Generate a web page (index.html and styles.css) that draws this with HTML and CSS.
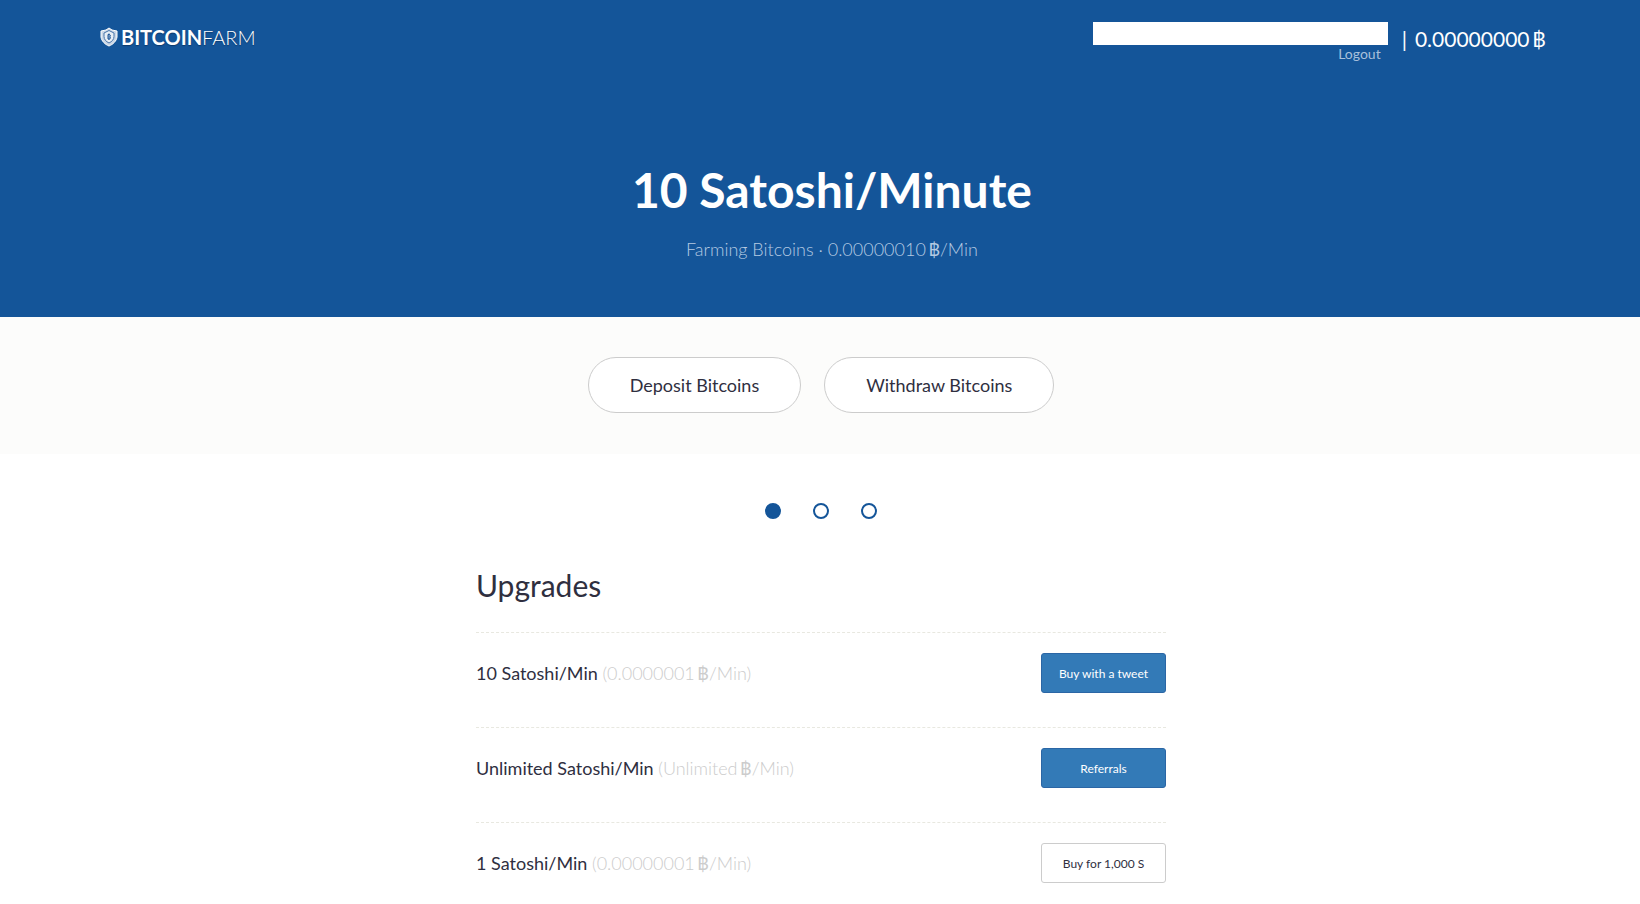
FILE: index.html
```html
<!DOCTYPE html>
<html lang="en">
<head>
<meta charset="utf-8">
<meta name="viewport" content="width=device-width, initial-scale=1">
<title>BitcoinFarm</title>
<link rel="stylesheet" href="styles.css">
</head>
<body>
<header class="hero">
  <nav class="topbar">
    <a class="logo" href="#">
      <svg class="logo-icon" viewBox="0 0 18 20" aria-hidden="true">
        <path d="M9 1 L12 3 L17 4 V10 C16.500 14 13 17.500 9 19 C5 17.500 1.500 14 1 10 V4 L6 3 Z" fill="#cbd7e6" stroke="#fff" stroke-width="1"/>
        <path d="M9 3.500 L14 6 V9.500 C14 12.500 12 14.500 9 16 C6 14.500 4 12.500 4 9.500 V6 Z" fill="#e8eef5" stroke="#4774aa" stroke-width="1"/>
        <path d="M8 7.500 H9.500 Q11 8 10 9.500 Q11 11.500 9.500 12 H8 Z M9 6.500 V13" fill="none" stroke="#1f5798" stroke-width="1"/>
      </svg>
      <span class="logo-text"><b>BITCOIN</b>FARM</span>
    </a>
    <div class="account">
      <div class="user">
        <div class="address"></div>
        <a class="logout" href="#">Logout</a>
      </div>
      <div class="balance"><span class="divider">|</span><span>0.00000000&thinsp;฿</span></div>
    </div>
  </nav>
  <div class="headline">
    <h1>10 Satoshi/Minute</h1>
    <p>Farming Bitcoins · 0.00000010&thinsp;<b>฿</b>/Min</p>
  </div>
</header>
<section class="actions">
  <button class="pill" type="button">Deposit Bitcoins</button>
  <button class="pill" type="button">Withdraw Bitcoins</button>
</section>
<main class="content">
  <div class="dots">
    <button class="dot dot-active" type="button" aria-label="Page 1"></button>
    <button class="dot" type="button" aria-label="Page 2"></button>
    <button class="dot" type="button" aria-label="Page 3"></button>
  </div>
  <h2>Upgrades</h2>
  <ul class="upgrades">
    <li><span class="name">10 Satoshi/Min <span class="rate">(0.0000001&thinsp;<b>฿</b>/Min)</span></span><button class="buy buy-primary" type="button">Buy with a tweet</button></li>
    <li><span class="name">Unlimited Satoshi/Min <span class="rate">(Unlimited&thinsp;<b>฿</b>/Min)</span></span><button class="buy buy-primary" type="button">Referrals</button></li>
    <li><span class="name">1 Satoshi/Min <span class="rate">(0.00000001&thinsp;<b>฿</b>/Min)</span></span><button class="buy" type="button">Buy for 1,000 S</button></li>
  </ul>
</main>
</body>
</html>
```
FILE: styles.css
```css
* {
  box-sizing: border-box;
}

body {
  margin: 0;
  background: #fff;
  color: #2f2f3f;
  font-family: Lato, "Open Sans", sans-serif;
  font-size: 18px;
}

button {
  font-family: inherit;
  color: inherit;
  cursor: pointer;
}

.hero {
  background: #145599;
  color: #fff;
  padding: 22px 94px 54px 100px;
}

.topbar {
  display: flex;
  justify-content: space-between;
  align-items: flex-start;
}

.logo {
  display: flex;
  align-items: center;
  gap: 3px;
  margin-top: 3px;
  color: #fff;
  text-decoration: none;
  text-shadow: 0 1px 1px #0d3a6c;
}

.logo-icon {
  width: 18px;
  height: 20px;
}

.logo-text {
  font-size: 20px;
  line-height: 24px;
  font-weight: 300;
}

.logo-text b {
  font-weight: 700;
}

.account {
  display: flex;
  gap: 14px;
}

.user {
  display: flex;
  flex-direction: column;
  align-items: flex-end;
}

.address {
  width: 295px;
  height: 23px;
  background: #fff;
}

.logout {
  margin-right: 7px;
  font-size: 14px;
  line-height: 18px;
  color: #a9c1dc;
  text-decoration: none;
}

.balance {
  display: flex;
  gap: 8px;
  font-size: 21px;
  line-height: 34px;
}

.headline {
  padding: 97px 0 0 18px;
  text-align: center;
}

.headline h1 {
  margin: 0;
  font-size: 48px;
  line-height: 60px;
  font-weight: 700;
}

.headline p {
  margin: 15px 0 0;
  font-size: 18px;
  line-height: 28px;
  font-weight: 300;
  color: #b5cae2;
}

.actions {
  display: flex;
  justify-content: center;
  gap: 23px;
  padding: 40px 0 41px 2px;
  background: #fcfcfb;
}

.pill {
  height: 56px;
  padding: 0 41px;
  border: 1px solid #ccc;
  border-radius: 28px;
  background: #fff;
  font-size: 18px;
}

.content {
  width: 692px;
  max-width: 100%;
  margin: 0 auto;
  padding: 49px 0 0 2px;
}

.dots {
  display: flex;
  justify-content: center;
  gap: 32px;
}

.dot {
  width: 16px;
  height: 16px;
  padding: 0;
  border: 2px solid #145599;
  border-radius: 50%;
  background: #fff;
}

.dot-active {
  background: #145599;
}

h2 {
  margin: 47px 0 28px;
  font-size: 30px;
  line-height: 38px;
  font-weight: 400;
}

.upgrades {
  margin: 0;
  padding: 0;
  list-style: none;
}

.upgrades li {
  display: flex;
  justify-content: space-between;
  align-items: center;
  padding: 20px 0 34px;
  border-top: 1px dashed #e8e8e0;
}

.rate {
  font-weight: 300;
  color: #ccc;
}

.buy {
  width: 125px;
  height: 40px;
  border: 1px solid #ccc;
  border-radius: 3px;
  background: #fff;
  font-size: 12px;
}

.buy-primary {
  border-color: #2b66a5;
  background: #337ab7;
  color: #fff;
}
```
